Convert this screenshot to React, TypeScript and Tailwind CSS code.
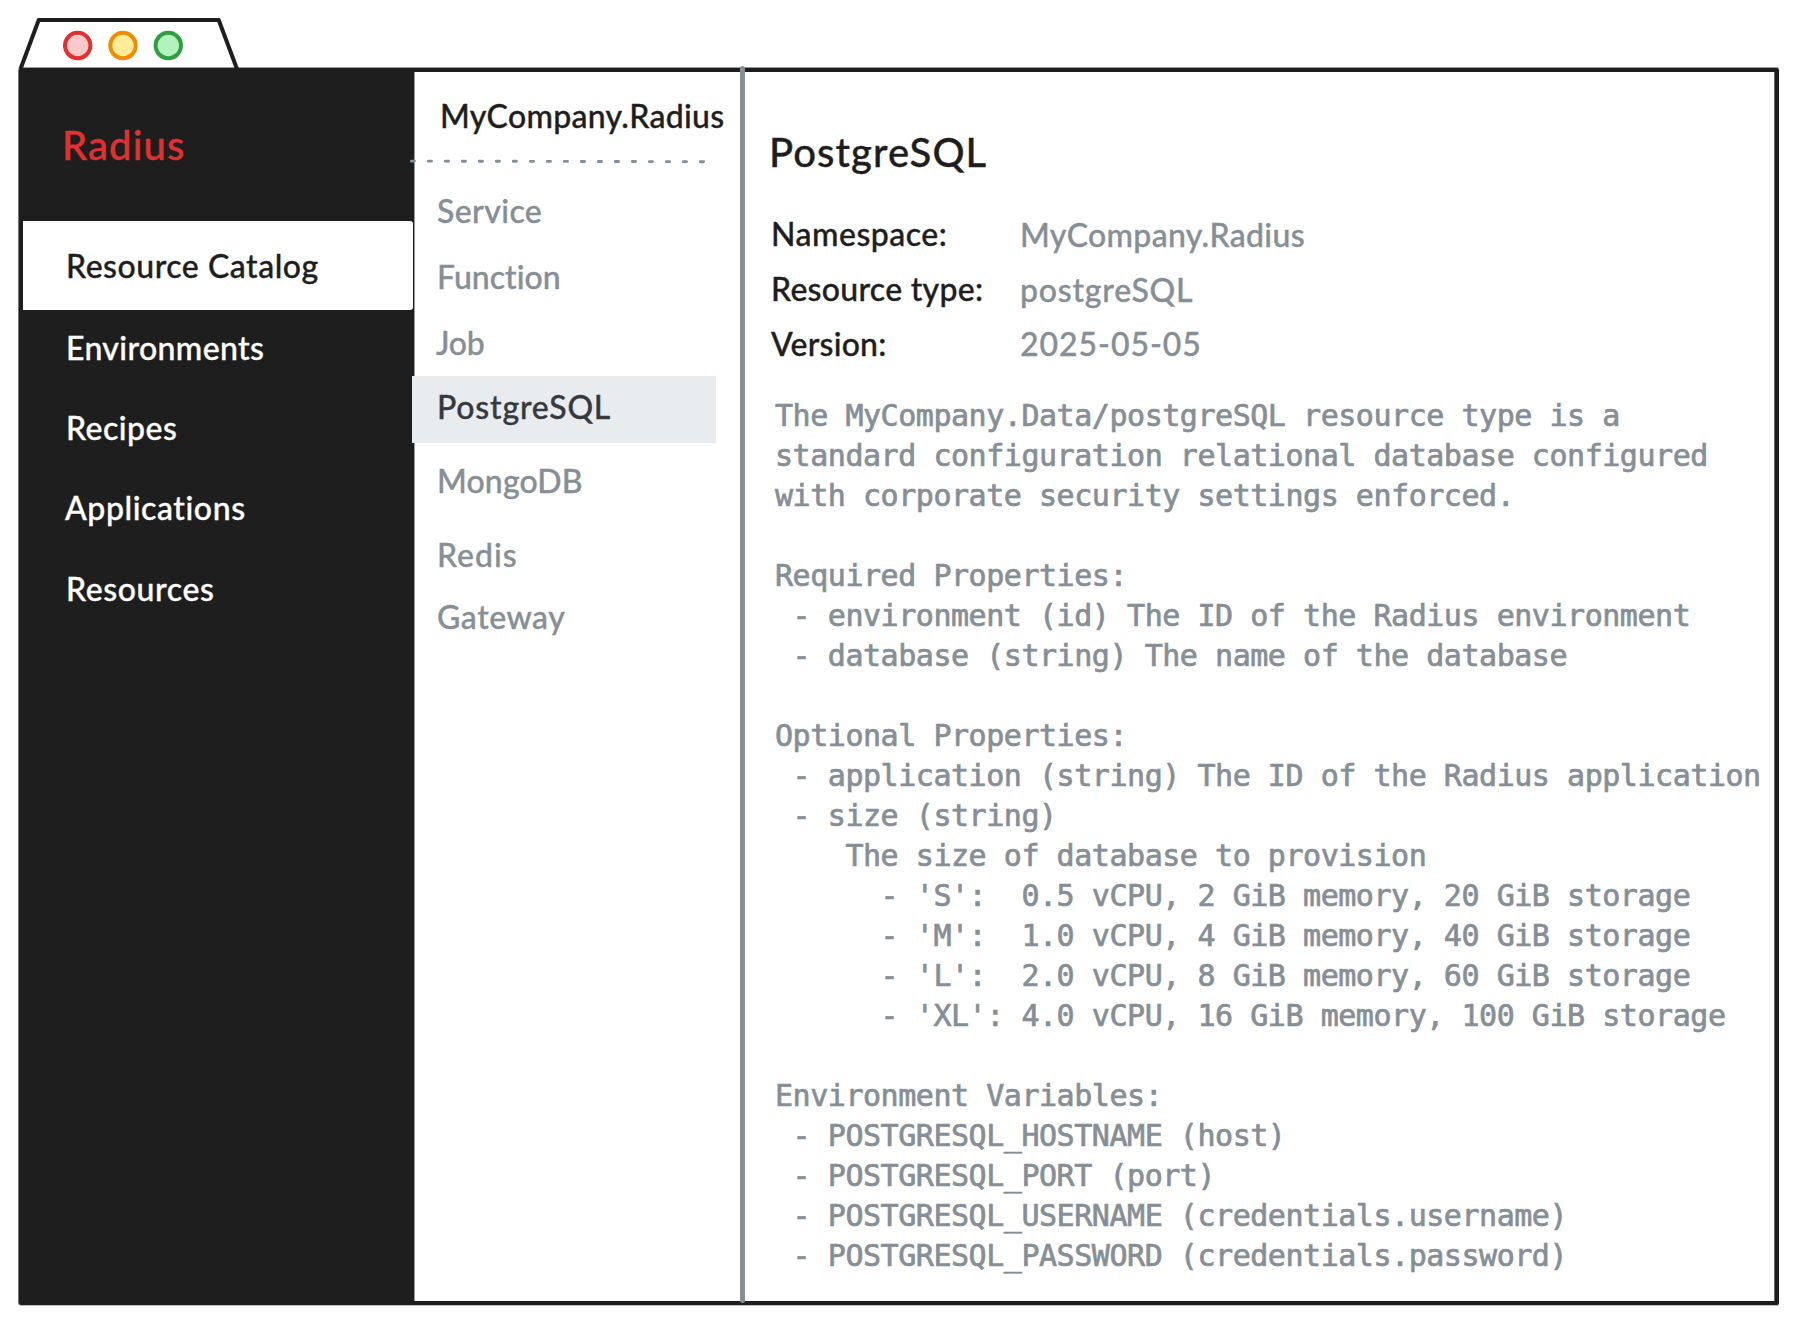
type Entry = { label: string; className: string };

const navItems: Entry[] = [
  { label: "Environments", className: "tracking-[0.37px]" },
  { label: "Recipes", className: "tracking-[0.48px]" },
  { label: "Applications", className: "-ml-px tracking-[0.58px]" },
  { label: "Resources", className: "pt-px tracking-[0.6px]" },
];

const catalogItems: Entry[] = [
  { label: "Service", className: "mt-[27px] pl-[22px] tracking-[0.4px]" },
  { label: "Function", className: "mt-[26px] pl-[22px] tracking-[0.02px]" },
  { label: "Job", className: "mt-[26px] pl-[21px] tracking-[-0.2px]" },
  {
    label: "PostgreSQL",
    className: "mt-[13px] -ml-[3px] h-[67px] w-[304px] bg-[#e9ecef] pt-[11px] pl-[25px] tracking-[0.8px] text-[#343a40]",
  },
  { label: "MongoDB", className: "mt-[18px] pl-[22px] tracking-[0.15px]" },
  { label: "Redis", className: "mt-[34px] pl-[22px] tracking-[1px]" },
  { label: "Gateway", className: "mt-[22px] pl-[22px] tracking-[0.55px]" },
];

const details = [
  { label: "Namespace:", value: "MyCompany.Radius", labelClass: "tracking-[0.5px]", valueClass: "pt-px tracking-[0.33px]" },
  { label: "Resource type:", value: "postgreSQL", labelClass: "tracking-[0.28px]", valueClass: "pt-px tracking-[0.77px]" },
  { label: "Version:", value: "2025-05-05", labelClass: "tracking-[0.2px]", valueClass: "tracking-[0.95px]" },
];

const description = `The MyCompany.Data/postgreSQL resource type is a
standard configuration relational database configured
with corporate security settings enforced.

Required Properties:
 - environment (id) The ID of the Radius environment
 - database (string) The name of the database

Optional Properties:
 - application (string) The ID of the Radius application
 - size (string)
    The size of database to provision
      - 'S':  0.5 vCPU, 2 GiB memory, 20 GiB storage
      - 'M':  1.0 vCPU, 4 GiB memory, 40 GiB storage
      - 'L':  2.0 vCPU, 8 GiB memory, 60 GiB storage
      - 'XL': 4.0 vCPU, 16 GiB memory, 100 GiB storage

Environment Variables:
 - POSTGRESQL_HOSTNAME (host)
 - POSTGRESQL_PORT (port)
 - POSTGRESQL_USERNAME (credentials.username)
 - POSTGRESQL_PASSWORD (credentials.password)`;

function WindowTab() {
  return (
    <svg className="block h-[68px] w-[260px] overflow-visible" viewBox="0 0 260 68" fill="none" strokeWidth="4">
      <path d="M20.5 69 38.7 20H218.7L237 69" stroke="#1e1e1e" strokeLinejoin="round" />
      <circle cx="77.7" cy="45.5" r="12.7" fill="#ffc9c9" stroke="#e03131" />
      <circle cx="123" cy="45.5" r="12.7" fill="#ffec99" stroke="#f08c00" />
      <circle cx="168.3" cy="45.5" r="12.7" fill="#b2f2bb" stroke="#2f9e44" />
    </svg>
  );
}

function Sidebar() {
  return (
    <nav className="flex w-[392px] shrink-0 flex-col border-r border-[#999] bg-[#1e1e1e] pt-[49px] text-white">
      <h1 className="h-12 pl-[39px] text-[40px] leading-12 tracking-[1.1px] text-[#e03131]">Radius</h1>
      <div className="mt-[52px] h-[89px] w-[390px] rounded-r-[3px] bg-white pt-[25px] pl-[43px] tracking-[0.52px] text-[#1e1e1e]">
        Resource Catalog
      </div>
      <div className="mt-[18px] flex flex-col gap-10 pl-[43px]">
        {navItems.map((item) => (
          <div key={item.label} className={item.className}>
            {item.label}
          </div>
        ))}
      </div>
    </nav>
  );
}

function Catalog() {
  return (
    <section className="flex w-[325px] shrink-0 flex-col pt-6 text-[#868e96]">
      <h2 className="pl-[25px] tracking-[0.3px] text-[#1e1e1e]">MyCompany.Radius</h2>
      <svg className="relative mt-[22px] -ml-[5px] block h-1.5 w-[300px]" viewBox="0 0 300 6" fill="none">
        <path
          d="M1.3 3.1 295 3.7"
          stroke="#868e96"
          strokeWidth="2.9"
          strokeLinecap="round"
          strokeDasharray="3.2 13.8"
        />
      </svg>
      {catalogItems.map((item) => (
        <div key={item.label} className={item.className}>
          {item.label}
        </div>
      ))}
    </section>
  );
}

function Details() {
  return (
    <main className="flex min-w-0 grow flex-col pt-14 text-[#1e1e1e]">
      <h2 className="mb-[38px] pl-6 text-[40px] leading-12 tracking-[1.05px]">PostgreSQL</h2>
      <dl className="flex flex-col gap-[15px] pl-[26px]">
        {details.map((row) => (
          <div key={row.label} className="flex h-10">
            <dt className={`w-[249px] ${row.labelClass}`}>{row.label}</dt>
            <dd className={`text-[#868e96] ${row.valueClass}`}>{row.value}</dd>
          </div>
        ))}
      </dl>
      <pre className="mt-[32px] pl-[30px] font-['DejaVu_Sans_Mono',monospace] text-[30px] leading-10 tracking-[-0.46px] text-[#868e96] [-webkit-text-stroke:0.7px]">
        {description}
      </pre>
    </main>
  );
}

export default function App() {
  return (
    <div className="h-[1323px] w-[1796px] overflow-hidden bg-white font-['Lato',sans-serif] text-[32px] leading-10 font-medium [-webkit-text-stroke:0.35px]">
      <WindowTab />
      <div className="ml-[19px] flex h-[1237px] w-[1760px] rounded-[2px] border-4 border-[#1e1e1e] shadow-[-1px_0_0_#777,0_-1px_0_#999,0_1px_0_#bbb,inset_-1px_0_0_#666]">
        <Sidebar />
        <Catalog />
        <div className="relative -mt-1.5 -mb-0.5 w-[5px] shrink-0 rounded-full bg-[#868e96]" />
        <Details />
      </div>
    </div>
  );
}
